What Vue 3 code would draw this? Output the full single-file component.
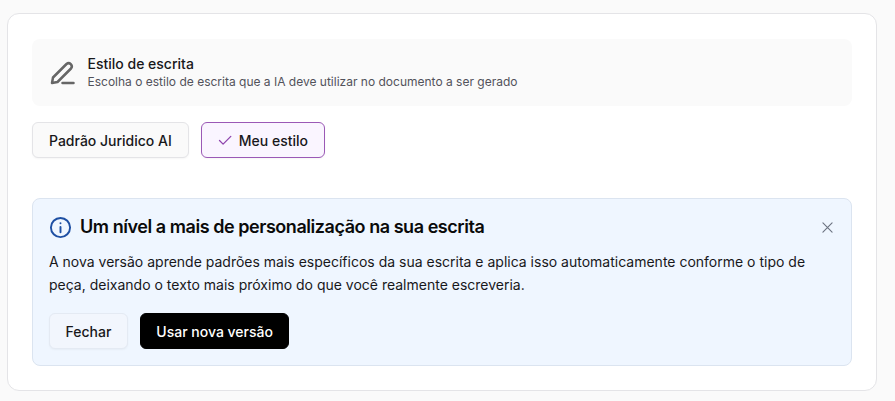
<script setup>
const styles = ['Padrão Juridico AI']
</script>

<template>
  <main class="page">
    <section class="card">
      <header class="head">
        <svg class="pen" viewBox="0 0 26 26" fill="none" stroke="currentColor" stroke-width="2.5" stroke-linecap="round" stroke-linejoin="round">
          <path d="M2 23l1-5.5L16.5 4a3.2 3.2 0 0 1 4.5 4.5L7.5 22z" />
          <path d="M12.5 23h11" />
        </svg>
        <div class="head-text">
          <div class="head-title">Estilo de escrita</div>
          <div class="head-sub">Escolha o estilo de escrita que a IA deve utilizar no documento a ser gerado</div>
        </div>
      </header>

      <div class="choices">
        <button v-for="s in styles" :key="s" class="choice">{{ s }}</button>
        <button class="choice selected">
          <svg class="check" viewBox="0 0 14 14" fill="none" stroke="currentColor" stroke-width="1.3" stroke-linecap="round" stroke-linejoin="round">
            <path d="M1.5 7.5l3.6 3.6L12.8 3.4" />
          </svg>
          Meu estilo
        </button>
      </div>

      <aside class="notice">
        <div class="notice-head">
          <svg class="info" viewBox="0 0 24 24" fill="none" stroke="currentColor" stroke-width="2" stroke-linecap="round">
            <circle cx="12" cy="12" r="10" />
            <path d="M12 11.5v5.5" />
            <path d="M12 7.4v.1" />
          </svg>
          <h2 class="notice-title">Um nível a mais de personalização na sua escrita</h2>
          <svg class="close" viewBox="0 0 12 12" fill="none" stroke="currentColor" stroke-width="1.2" stroke-linecap="round">
            <path d="M1 1l10 10M11 1L1 11" />
          </svg>
        </div>
        <p class="notice-body">A nova versão aprende padrões mais específicos da sua escrita e aplica isso automaticamente conforme o tipo de peça, deixando o texto mais próximo do que você realmente escreveria.</p>
        <div class="actions">
          <button class="btn ghost">Fechar</button>
          <button class="btn dark">Usar nova versão</button>
        </div>
      </aside>
    </section>
  </main>
</template>

<style scoped>
.page {
  box-sizing: border-box;
  width: 895px;
  height: 401px;
  padding: 13px 18px 10px 7px;
  background: #fafafa;
  font-family: Inter, "Liberation Sans", sans-serif;
  color: #18181b;
  overflow: hidden;
}
.card {
  box-sizing: border-box;
  height: 378px;
  padding: 25px 24px 24px;
  background: #fff;
  border: 1px solid #e4e4e7;
  border-radius: 12px;
}
.head {
  display: flex;
  align-items: center;
  gap: 11.5px;
  height: 67px;
  box-sizing: border-box;
  padding: 0 18px;
  background: #fafafa;
  border-radius: 8px;
}
.pen {
  width: 26px;
  height: 26px;
  color: #666;
  flex: none;
}
.head-title {
  font-size: 14px;
  line-height: 18px;
  font-weight: 500;
  color: #18181b;
}
.head-sub {
  font-size: 12px;
  line-height: 17px;
  color: #52525b;
}
.choices {
  display: flex;
  gap: 12px;
  margin-top: 16px;
}
button {
  font-family: inherit;
  cursor: pointer;
}
.choice {
  display: flex;
  align-items: center;
  gap: 7px;
  box-sizing: border-box;
  height: 36px;
  padding: 0 16px;
  font-size: 14px;
  font-weight: 500;
  color: #18181b;
  background: #fafafa;
  border: 1px solid #e4e4e7;
  border-radius: 6px;
  box-shadow: 0 1px 2px rgba(0, 0, 0, 0.04);
}
.selected {
  background: #faf5ff;
  border-color: #9b59b6;
}
.check {
  width: 14px;
  height: 14px;
  color: #8e44ad;
}
.notice {
  box-sizing: border-box;
  height: 168px;
  margin-top: 40px;
  padding: 16px;
  background: #eff6ff;
  border: 1px solid #dbe4f0;
  border-radius: 8px;
}
.notice-head {
  display: flex;
  align-items: center;
  gap: 8px;
  height: 24px;
}
.info {
  width: 23px;
  height: 23px;
  color: #1e4fa3;
  flex: none;
}
.notice-title {
  flex: 1;
  margin: 0;
  font-size: 18px;
  line-height: 24px;
  font-weight: 600;
  letter-spacing: -0.45px;
  color: #0a0a0a;
}
.close {
  width: 11px;
  height: 11px;
  margin-right: 2px;
  color: #6b7280;
  flex: none;
}
.notice-body {
  margin: 11px 0 0;
  font-size: 14px;
  line-height: 23px;
  color: #18181b;
}
.actions {
  display: flex;
  gap: 12px;
  margin-top: 17px;
}
.btn {
  box-sizing: border-box;
  height: 36px;
  padding: 0 15.5px;
  font-size: 14px;
  font-weight: 500;
  border-radius: 6px;
}
.ghost {
  color: #18181b;
  background: #f2f6fd;
  border: 1px solid #e4eaf3;
  box-shadow: 0 1px 2px rgba(0, 0, 0, 0.04);
}
.dark {
  color: #fff;
  background: #000;
  border: 1px solid #000;
}
</style>
